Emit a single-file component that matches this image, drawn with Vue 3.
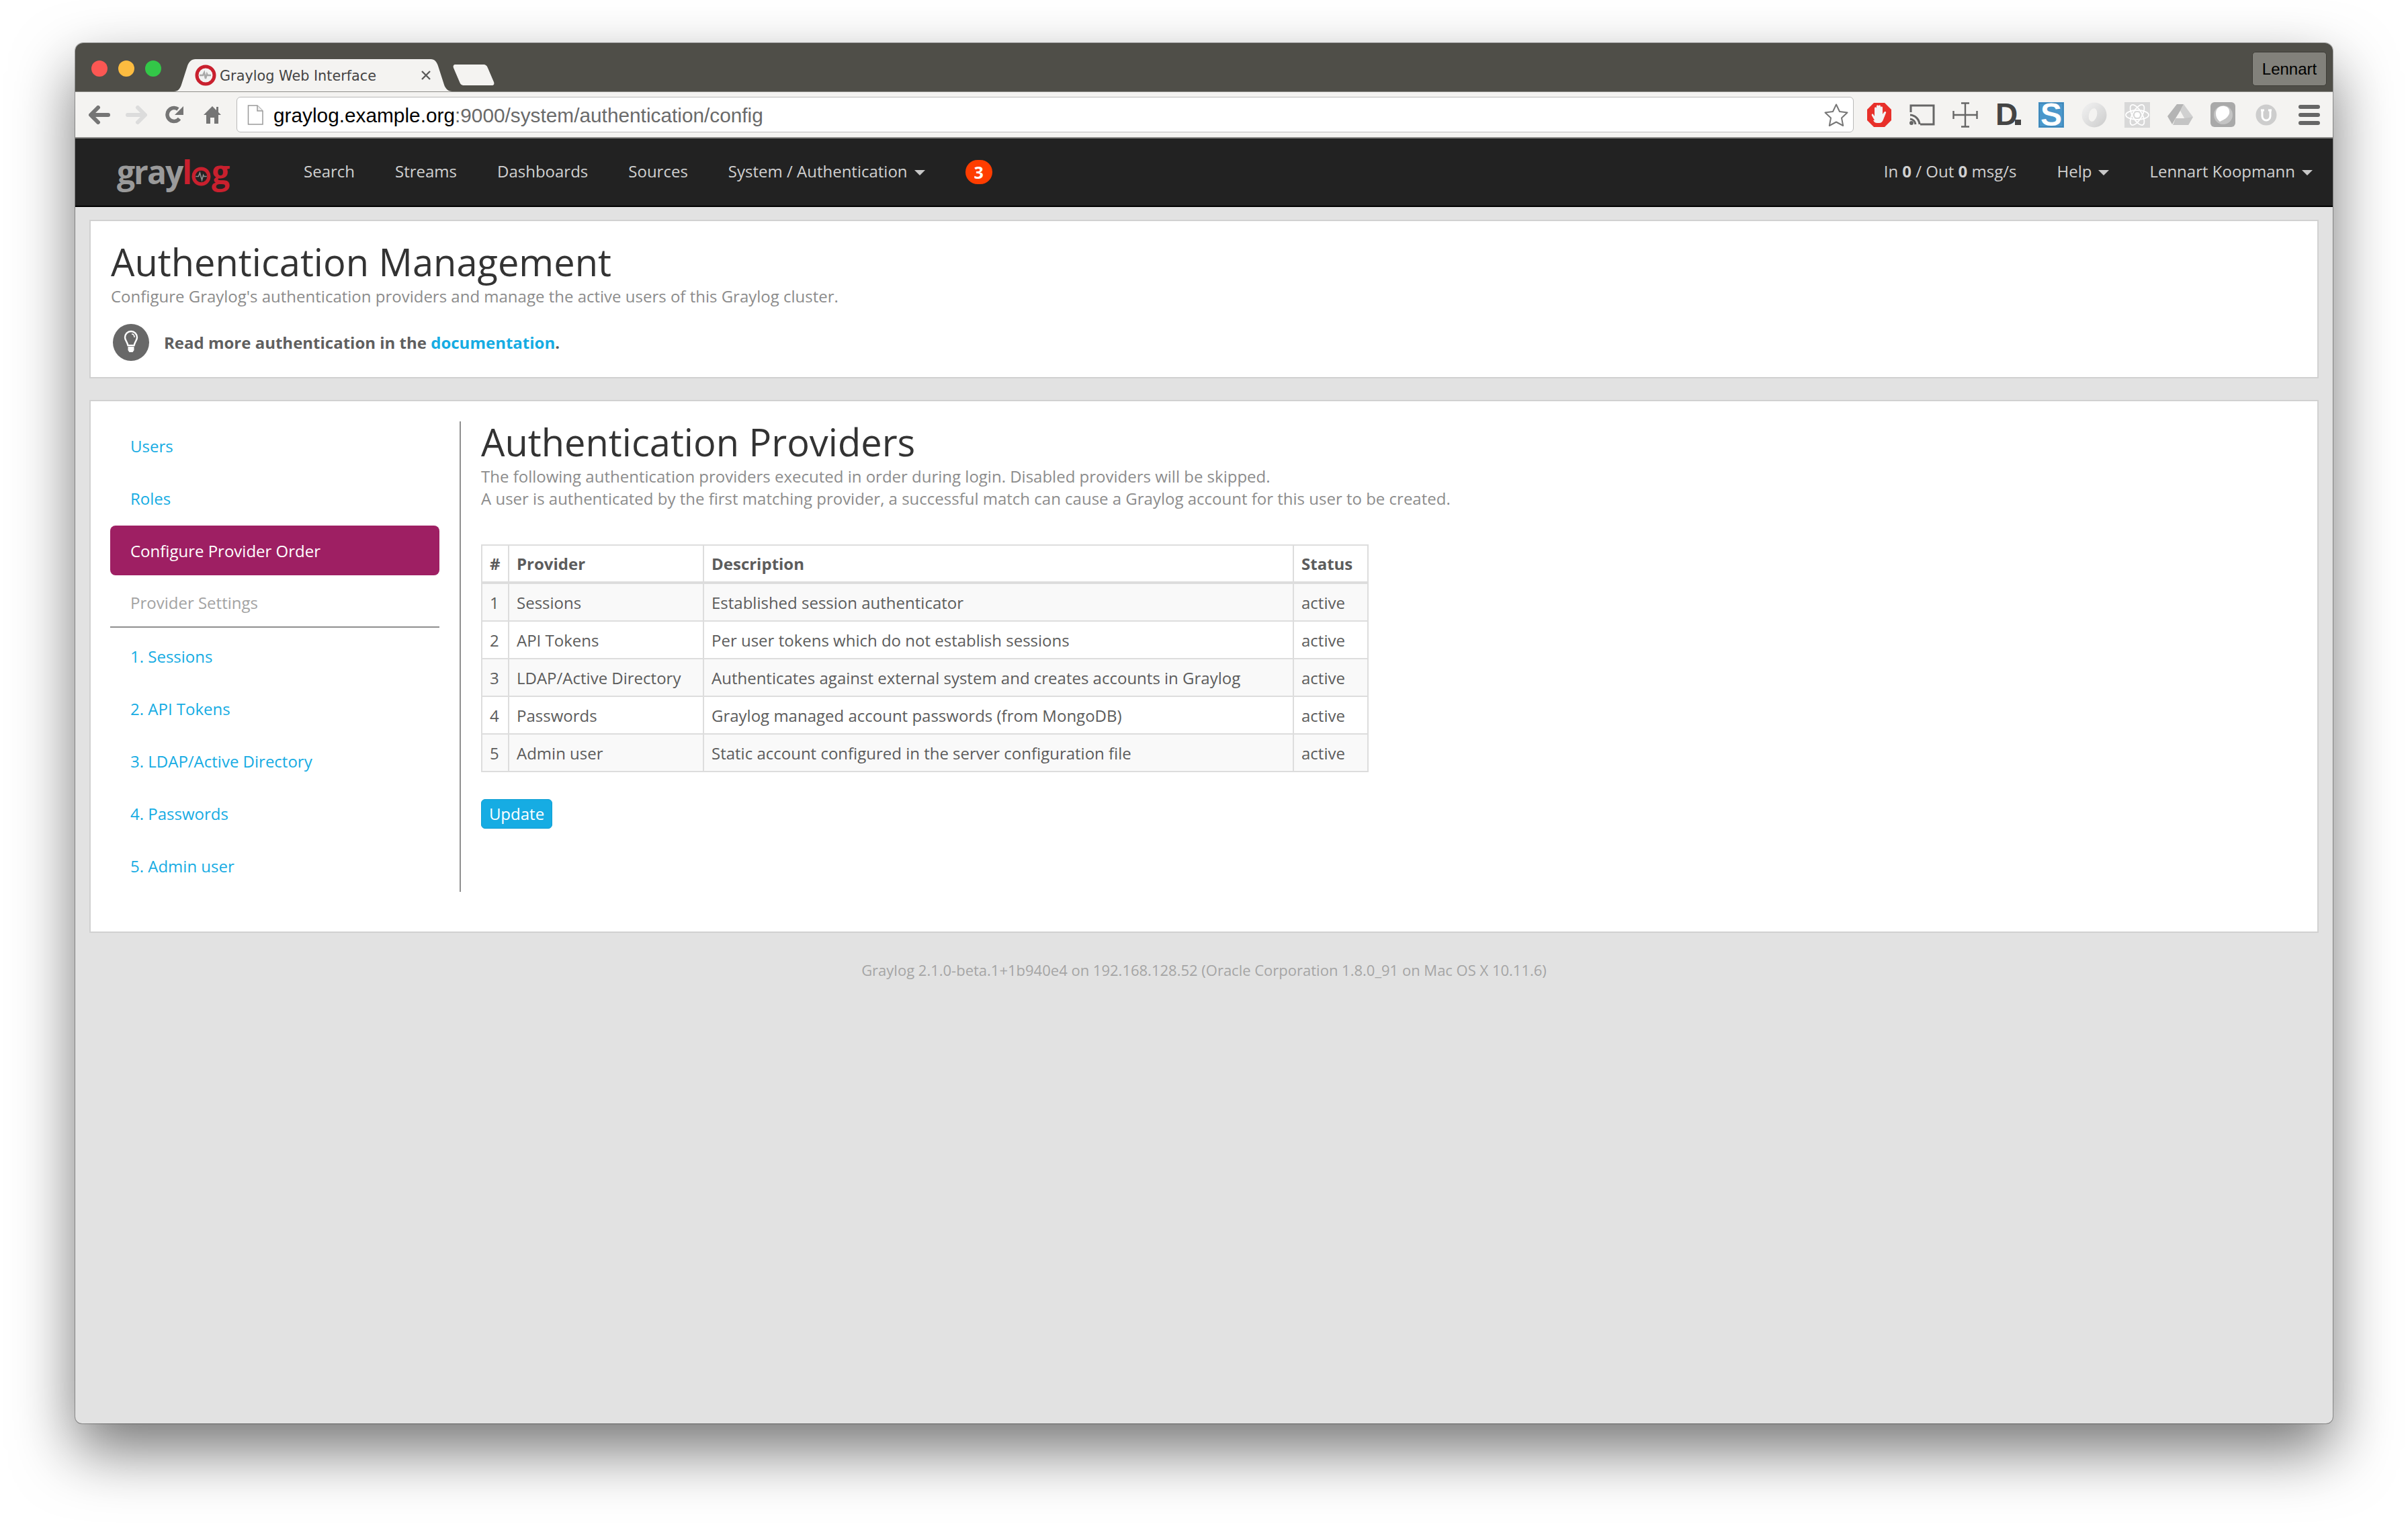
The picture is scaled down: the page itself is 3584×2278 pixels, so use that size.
<script setup>
const navLeft = ['Search', 'Streams', 'Dashboards', 'Sources']
const sideTop = ['Users', 'Roles']
const sideProviders = ['1. Sessions', '2. API Tokens', '3. LDAP/Active Directory', '4. Passwords', '5. Admin user']
const rows = [
  ['1', 'Sessions', 'Established session authenticator'],
  ['2', 'API Tokens', 'Per user tokens which do not establish sessions'],
  ['3', 'LDAP/Active Directory', 'Authenticates against external system and creates accounts in Graylog'],
  ['4', 'Passwords', 'Graylog managed account passwords (from MongoDB)'],
  ['5', 'Admin user', 'Static account configured in the server configuration file'],
]
</script>

<template>
  <div class="stage">
    <div class="window">
      <header class="titlebar">
        <div class="lights">
          <i class="light red"></i><i class="light yellow"></i><i class="light green"></i>
        </div>
        <div class="tab">
          <svg class="tab-shape" width="414" height="48" viewBox="0 0 414 48">
            <path d="M0 48C6 48 9 44 11 38L20 10C22 4 26 0 32 0H382C388 0 391 4 393 10L402 38C404 44 408 48 414 48Z" fill="#f4f3f1" />
          </svg>
          <svg class="favicon" width="32" height="32" viewBox="0 0 32 32">
            <circle cx="16" cy="16" r="13" fill="#f2f2f2" stroke="#c9202e" stroke-width="5" />
            <path d="M7 16h5l2-4 2 9 2-7 1 2h5" fill="none" stroke="#a9a9a9" stroke-width="2.5" />
          </svg>
          <span class="tab-title">Graylog Web Interface</span>
          <svg class="tab-close" width="16" height="16" viewBox="0 0 16 16">
            <path d="M2 2l12 12M14 2L2 14" stroke="#5a5a5a" stroke-width="2.4" />
          </svg>
        </div>
        <svg class="newtab" width="64" height="31" viewBox="0 0 64 31">
          <path d="M5 0H46C50 0 52 2 53 5L62 26C63 29 62 31 59 31H18C14 31 12 29 11 26L2 5C1 2 2 0 5 0Z" fill="#f4f3f1" />
        </svg>
        <div class="spacer"></div>
        <div class="profile">Lennart</div>
      </header>

      <div class="toolbar">
        <div class="tool-nav">
          <svg width="32" height="28" viewBox="0 0 32 28"><path d="M14 3L3 14l11 11M4 14h25" fill="none" stroke="#757575" stroke-width="6" stroke-linecap="round" stroke-linejoin="round" /></svg>
          <svg class="t-forward" width="32" height="28" viewBox="0 0 32 28"><path d="M18 3l11 11-11 11M28 14H3" fill="none" stroke="#dcdcdc" stroke-width="6" stroke-linecap="round" stroke-linejoin="round" /></svg>
          <svg class="t-reload" width="28" height="28" viewBox="0 0 28 28"><path d="M21 19.500A10 10 0 1 1 19 5.500" fill="none" stroke="#757575" stroke-width="5.500" /><path d="M27 1v13H14z" fill="#757575" /></svg>
          <svg class="t-home" width="26" height="28" viewBox="0 0 26 28"><path d="M13 1L0 14h4v13h6v-9h6v9h6V14h4l-4-4V2h-3v5z" fill="#757575" /></svg>
        </div>
        <div class="omnibox">
          <svg class="doc" width="24" height="30" viewBox="0 0 24 30">
            <path d="M1.500 1H15l8 8v20H1.500z" fill="#fff" stroke="#9a9a9a" stroke-width="1.500" />
            <path d="M15 1v8h8" fill="#efefef" stroke="#9a9a9a" stroke-width="1.500" />
          </svg>
          <span class="url"><span class="url-host">graylog.example.org</span>:9000/system/authentication/config</span>
          <svg class="star" width="38" height="36" viewBox="0 0 38 36">
            <path d="M19 2.500l5 10.500 11.500 1.500-8.500 8 2.200 11.500L19 28.500 8.800 34 11 22.500l-8.500-8L14 13z" fill="#fff" stroke="#777" stroke-width="2" stroke-linejoin="round" />
          </svg>
        </div>
        <div class="extensions">
          <svg viewBox="0 0 38 38" width="38" height="38">
            <path d="M11 1h16l10 10v16L27 37H11L1 27V11z" fill="#e8302a" />
            <path d="M12 27L8 20c-1-2 1-3 2-2l2 3V9c0-2 3-2 3 0v6V6c0-2 3-2 3 0v9V6c0-2 3-2 3 0v9V8c0-2 3-2 3 0v10l2-3c1-2 4-1 3 1l-4 10c-1 3-3 5-6 5h-3c-3 0-4-1-6-4z" fill="#f3f3f3" />
          </svg>
          <svg viewBox="0 0 38 38" width="38" height="38">
            <path d="M2 15V5h34v28H16" fill="none" stroke="#666" stroke-width="3" />
            <path d="M1 19a15 15 0 0 1 14 14M1 25a9 9 0 0 1 8 8" fill="none" stroke="#666" stroke-width="3" />
            <circle cx="3" cy="31" r="3" fill="#666" />
          </svg>
          <svg viewBox="0 0 38 38" width="38" height="38">
            <path d="M19 1v36M13 1.500h12M13 36.500h12M1 19h36M1.500 13v12M36.500 13v12" fill="none" stroke="#666" stroke-width="2.400" />
          </svg>
          <svg viewBox="0 0 38 38" width="38" height="38">
            <text x="0" y="34" class="ext-d">D</text>
            <rect x="29" y="26" width="9" height="8" fill="#444" />
          </svg>
          <svg viewBox="0 0 38 38" width="38" height="38">
            <rect x="0" y="0" width="38" height="38" fill="#4a97cb" />
            <rect x="1.500" y="1.500" width="35" height="35" fill="none" stroke="#3c7fae" />
            <text x="19" y="35" text-anchor="middle" class="ext-s">S</text>
          </svg>
          <svg viewBox="0 0 38 38" width="38" height="38">
            <defs><linearGradient id="ring" x1="0" y1="0" x2="1" y2="1"><stop offset="0" stop-color="#f3f3f3" /><stop offset="1" stop-color="#cbcbcb" /></linearGradient></defs>
            <circle cx="19" cy="19" r="18.500" fill="url(#ring)" />
            <ellipse cx="17" cy="19" rx="6" ry="10" transform="rotate(15 17 19)" fill="#f4f3f1" />
          </svg>
          <svg viewBox="0 0 38 38" width="38" height="38">
            <rect width="38" height="38" fill="#d8d8d8" />
            <g fill="none" stroke="#fff" stroke-width="1.800">
              <ellipse cx="19" cy="19" rx="17" ry="7" />
              <ellipse cx="19" cy="19" rx="17" ry="7" transform="rotate(60 19 19)" />
              <ellipse cx="19" cy="19" rx="17" ry="7" transform="rotate(120 19 19)" />
            </g>
            <circle cx="19" cy="19" r="4" fill="#fff" />
          </svg>
          <svg viewBox="0 0 38 38" width="38" height="38">
            <path d="M14 3h10L19 13 12 24l-5 9-7-12z" fill="#b4b4b4" />
            <path d="M24 3l14 19-7 12-6-10-6-11z" fill="#d0d0d0" />
            <path d="M12 24h14l12-2-7 12H8z" fill="#c4c4c4" />
            <path d="M19 13l6 11H13z" fill="#f4f3f1" />
          </svg>
          <svg viewBox="0 0 38 38" width="38" height="38">
            <rect width="37" height="37" rx="6" fill="#a9a9a9" />
            <circle cx="19" cy="19" r="14" fill="#c4c4c4" />
            <path d="M8 17C8 9 14 5 21 6c6 1 8 6 7 11-2 6-8 9-14 12-4-3-6-7-6-12z" fill="#fff" />
          </svg>
          <svg viewBox="0 0 38 38" width="38" height="38">
            <circle cx="19" cy="19" r="15.500" fill="#cdcdcd" />
            <path d="M13 12v9a6 6 0 0 0 12 0v-9M11 12h5M22 12h5" fill="none" stroke="#fff" stroke-width="3" />
          </svg>
          <svg viewBox="0 0 38 38" width="38" height="38">
            <path d="M6 7h26M6 19h26M6 31h26" stroke="#666" stroke-width="6" stroke-linecap="round" />
          </svg>
        </div>
      </div>

      <nav class="navbar">
        <div class="logo"><span class="logo-gray">gray</span><span class="logo-red">l<span class="logo-o"><svg width="29" height="29" viewBox="0 0 28 28"><circle cx="14" cy="14" r="11" fill="none" stroke="#c9202e" stroke-width="5" /><path d="M6 14h4l2-5 3 10 2-7 1 2h4" fill="none" stroke="#8d8d8d" stroke-width="1.600" /></svg></span>g</span></div>
        <ul class="nav-list">
          <li v-for="item in navLeft" :key="item" class="nav-item">{{ item }}</li>
          <li class="nav-item">System / Authentication<i class="caret"></i></li>
          <li class="nav-badge">3</li>
        </ul>
        <div class="spacer"></div>
        <ul class="nav-list">
          <li class="nav-item">In <b>0</b> / Out <b>0</b> msg/s</li>
          <li class="nav-item">Help<i class="caret"></i></li>
          <li class="nav-item">Lennart Koopmann<i class="caret"></i></li>
        </ul>
      </nav>

      <main class="page">
        <section class="card header-card">
          <h1>Authentication Management</h1>
          <p class="lead">Configure Graylog's authentication providers and manage the active users of this Graylog cluster.</p>
          <div class="docs">
            <span class="bulb">
              <svg width="24" height="36" viewBox="0 0 24 36">
                <path d="M12 2a9 9 0 0 0-9 9c0 4 3 6 4.500 12h9C18 17 21 15 21 11a9 9 0 0 0-9-9z" fill="none" stroke="#fff" stroke-width="2.400" />
                <path d="M13 6c3 0 4 2 4 5" fill="none" stroke="#fff" stroke-width="1.600" />
                <path d="M7.500 25h9v5l-2 3h-5l-2-3z" fill="#fff" />
              </svg>
            </span>
            <span class="docs-text">Read more authentication in the <a class="link">documentation</a>.</span>
          </div>
        </section>

        <section class="card main-card">
          <aside class="sidebar">
            <a v-for="item in sideTop" :key="item" class="side-item link">{{ item }}</a>
            <a class="side-item active">Configure Provider Order</a>
            <div class="side-head">Provider Settings</div>
            <a v-for="item in sideProviders" :key="item" class="side-item link">{{ item }}</a>
          </aside>
          <div class="content">
            <h2>Authentication Providers</h2>
            <p class="lead body-lead">The following authentication providers executed in order during login. Disabled providers will be skipped.<br />A user is authenticated by the first matching provider, a successful match can cause a Graylog account for this user to be created.</p>
            <table class="providers">
              <colgroup>
                <col class="c1" /><col class="c2" /><col class="c3" /><col class="c4" />
              </colgroup>
              <thead>
                <tr><th>#</th><th>Provider</th><th>Description</th><th>Status</th></tr>
              </thead>
              <tbody>
                <tr v-for="row in rows" :key="row[0]">
                  <td>{{ row[0] }}</td><td>{{ row[1] }}</td><td>{{ row[2] }}</td><td>active</td>
                </tr>
              </tbody>
            </table>
            <button class="update">Update</button>
          </div>
        </section>

        <footer class="foot">Graylog 2.1.0-beta.1+1b940e4 on 192.168.128.52 (Oracle Corporation 1.8.0_91 on Mac OS X 10.11.6)</footer>
      </main>
    </div>
  </div>
</template>

<style>
html, body { margin: 0; background: #fff; }
</style>

<style scoped>
.stage {
  width: 3584px;
  height: 2278px;
  box-sizing: border-box;
  padding: 64px 112px 0;
  overflow: hidden;
  background: #fff;
  font-family: "Open Sans", sans-serif;
}
.window {
  width: 3360px;
  height: 2054px;
  display: flex;
  flex-direction: column;
  border-radius: 12px 12px 10px 10px;
  overflow: hidden;
  box-shadow: 0 40px 90px rgba(0, 0, 0, .54), 0 0 0 1px rgba(0, 0, 0, .3);
  background: #e2e2e2;
}
.spacer { flex: 1; }

.titlebar {
  height: 72px;
  flex: none;
  box-sizing: border-box;
  background: #4f4e48;
  display: flex;
  align-items: flex-end;
  padding-right: 9px;
}
.lights { display: flex; gap: 16px; padding: 0 0 22px 24px; }
.light { width: 24px; height: 24px; border-radius: 50%; display: block; }
.red { background: #fc5753; }
.yellow { background: #fdbc40; }
.green { background: #33c748; }

.tab {
  position: relative;
  width: 414px;
  height: 48px;
  margin-left: 19px;
  display: flex;
  align-items: center;
  padding-left: 31px;
  box-sizing: border-box;
}
.tab-shape { position: absolute; left: 0; top: 0; }
.favicon { position: relative; margin-right: 5px; }
.tab-title {
  position: relative;
  top: 1px;
  font-family: "DejaVu Sans", sans-serif;
  font-size: 20.8px;
  color: #444;
  white-space: nowrap;
  width: 299px;
}
.tab-close { position: relative; }
.newtab { margin-bottom: 9px; }
.profile {
  align-self: flex-start;
  margin-top: 13px;
  width: 111px;
  height: 51px;
  box-sizing: border-box;
  border: 1px solid #3d3c37;
  border-radius: 5px;
  background: #82817b;
  color: #000;
  font-family: "Liberation Sans", sans-serif;
  font-size: 24px;
  line-height: 49px;
  text-align: center;
}

.toolbar {
  height: 70px;
  flex: none;
  box-sizing: border-box;
  background: #f4f3f1;
  border-top: 1px solid #8f8e8a;
  border-bottom: 2px solid #8b8b89;
  display: flex;
  align-items: center;
  padding: 0 16px 0 20px;
}
.tool-nav { display: flex; align-items: center; width: 220px; flex: none; }
.t-forward { margin-left: 23px; }
.t-reload { margin-left: 27px; }
.t-home { margin-left: 29px; }
.omnibox {
  flex: none;
  width: 2407px;
  height: 53px;
  box-sizing: border-box;
  margin-right: 19px;
  background: #fff;
  border: 1px solid #b9b9b9;
  border-radius: 6px;
  display: flex;
  align-items: center;
  padding: 0 6px 0 15px;
}
.doc { flex: none; margin-right: 15px; }
.url {
  flex: 1;
  font-family: "Liberation Sans", sans-serif;
  font-size: 29.8px;
  color: #6a6a6a;
  white-space: nowrap;
  padding-top: 2px;
}
.url-host { color: #000; }
.extensions { display: flex; gap: 26px; align-items: center; }
.extensions svg { display: block; overflow: visible; }
.ext-d { font-family: "Liberation Sans", sans-serif; font-weight: 700; font-size: 46px; fill: #444; }
.ext-s { font-family: "Liberation Sans", sans-serif; font-weight: 700; font-size: 48px; fill: #fff; }

.navbar {
  height: 102px;
  flex: none;
  box-sizing: border-box;
  background: #222;
  border-bottom: 2px solid #000;
  display: flex;
  align-items: center;
  padding-left: 62px;
}
.logo {
  width: 248px;
  flex: none;
  font-size: 48px;
  font-weight: 700;
  letter-spacing: -2px;
  line-height: 60px;
  white-space: nowrap;
}
.logo-gray { color: #9a9a9a; }
.logo-red { color: #c9202e; }
.logo-o { display: inline-block; width: 29px; margin: 0 1px; vertical-align: -3px; }
.logo-o svg { display: block; }
.nav-list { list-style: none; margin: 0; padding: 0; display: flex; align-items: center; }
.nav-item {
  padding: 0 30px;
  margin-bottom: 2px;
  font-size: 24px;
  color: #d0d0d0;
  white-space: nowrap;
  line-height: 34px;
}
.nav-item b { font-weight: 700; }
.caret {
  display: inline-block;
  margin-left: 10px;
  vertical-align: 3px;
  border-top: 8px solid #c8c8c8;
  border-left: 8px solid transparent;
  border-right: 8px solid transparent;
}
.nav-badge {
  width: 40px;
  height: 36px;
  margin-left: 30px;
  border-radius: 20px;
  background: #ff3d00;
  color: #fff;
  font-size: 25px;
  font-weight: 700;
  line-height: 36px;
  text-align: center;
}

.page { flex: 1; padding: 19px 21px 0; box-sizing: border-box; }
.card {
  background: #fff;
  border: 2px solid #d1d1d1;
  box-sizing: border-box;
}
.header-card { height: 236px; padding: 28px 30px 0; margin-bottom: 32px; }
h1 {
  margin: 0 0 3px;
  font-size: 56px;
  font-weight: 400;
  line-height: 64px;
  color: #333;
}
.lead { margin: 0; font-size: 24px; line-height: 34px; color: #8c8c8c; }
.docs { display: flex; align-items: center; margin-top: 23px; height: 56px; padding-left: 3px; }
.bulb {
  width: 54px;
  height: 55px;
  border-radius: 50%;
  background: #686868;
  display: flex;
  align-items: center;
  justify-content: center;
  margin-right: 22px;
  flex: none;
}
.docs-text { font-size: 24px; font-weight: 700; color: #5f5f5f; }
.link { color: #16ace3; }

.main-card { height: 793px; display: flex; padding: 30px 30px 0 29px; }
.sidebar {
  width: 522px;
  height: 700px;
  flex: none;
  box-sizing: border-box;
  padding-right: 30px;
  border-right: 2px solid #8f8f8f;
  display: flex;
  flex-direction: column;
  gap: 4px;
}
.sidebar a:first-child { margin-top: -1px; }
.side-item, .side-head {
  height: 74px;
  flex: none;
  box-sizing: border-box;
  padding: 0 30px;
  display: flex;
  align-items: center;
  font-size: 24px;
  border-radius: 8px;
}
.active { background: #9e1f63; color: #fff; }
.side-head { color: #a3a3a3; border-bottom: 2px solid #8f8f8f; border-radius: 0; height: 74px; margin-bottom: 1px; }
.content { padding-left: 30px; margin-top: -1px; }
h2 {
  margin: 0;
  font-size: 56px;
  font-weight: 400;
  line-height: 62px;
  color: #333;
}
.body-lead { line-height: 33px; margin-top: 4px; }
.providers {
  margin-top: 52px;
  table-layout: fixed;
  width: 1319px;
  border-collapse: collapse;
  font-size: 24px;
  color: #5c5c5c;
}
.c1 { width: 40px; }
.c2 { width: 290px; }
.c3 { width: 878px; }
.c4 { width: 111px; }
th, td {
  border: 2px solid #ddd;
  padding: 0 11px;
  text-align: left;
  white-space: nowrap;
}
th { height: 53px; font-weight: 700; border-bottom-width: 4px; }
td { height: 54px; }
tbody tr:nth-child(odd) td { background: #f9f9f9; }
.update {
  display: block;
  margin-top: 40px;
  width: 106px;
  height: 44px;
  padding: 0;
  background: #16ace3;
  border: 1px solid #0f9fd4;
  border-radius: 6px;
  color: #fff;
  font-family: "Open Sans", sans-serif;
  font-size: 24px;
  line-height: 40px;
}
.foot {
  margin-top: 40px;
  text-align: center;
  font-size: 22px;
  line-height: 30px;
  color: #a5a5a5;
}
</style>
